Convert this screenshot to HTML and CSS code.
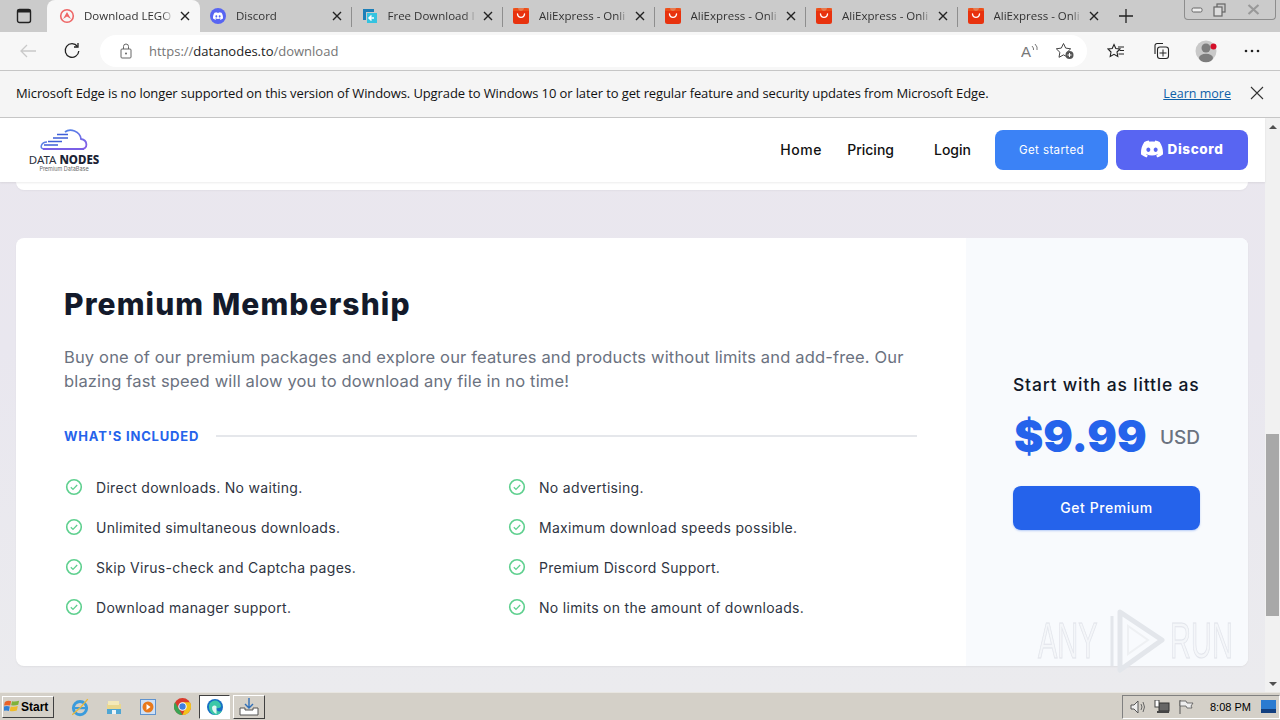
FILE: index.html
```html
<!DOCTYPE html>
<html lang="en">
<head>
<meta charset="utf-8">
<title>Download - Data Nodes</title>
<link rel="stylesheet" href="styles.css">
</head>
<body>
<svg class="defs" width="0" height="0" aria-hidden="true">
  <symbol id="ali" viewBox="0 0 16 16"><path d="M2.500 0H5c.3 4 5.700 4 6 0h2.500A2.500 2.500 0 0 1 16 2.500v11a2.500 2.500 0 0 1-2.500 2.500h-11A2.500 2.500 0 0 1 0 13.500v-11A2.500 2.500 0 0 1 2.500 0z" fill="#e8320e"/><path d="M0 0h16v3H0z" fill="#f05a1e" opacity=".7"/><path d="M4.500 6c.5 4.500 6.500 4.500 7 0" fill="none" stroke="#fff" stroke-width="1.400" stroke-linecap="round"/></symbol>
  <symbol id="x" viewBox="0 0 10 10"><path d="M1 1l8 8M9 1l-8 8" fill="none" stroke="#222" stroke-width="1.400"/></symbol>
  <symbol id="discord" viewBox="0 0 24 24"><path fill="currentColor" d="M20.317 4.3698a19.7913 19.7913 0 00-4.8851-1.5152.0741.0741 0 00-.0785.0371c-.211.3753-.4447.8648-.6083 1.2495-1.8447-.2762-3.68-.2762-5.4868 0-.1636-.3933-.4058-.8742-.6177-1.2495a.077.077 0 00-.0785-.037 19.7363 19.7363 0 00-4.8852 1.515.0699.0699 0 00-.0321.0277C.5334 9.0458-.319 13.5799.0992 18.0578a.0824.0824 0 00.0312.0561c2.0528 1.5076 4.0413 2.4228 5.9929 3.0294a.0777.0777 0 00.0842-.0276c.4616-.6304.8731-1.2952 1.226-1.9942a.076.076 0 00-.0416-.1057c-.6528-.2476-1.2743-.5495-1.8722-.8923a.077.077 0 01-.0076-.1277c.1258-.0943.2517-.1923.3718-.2914a.0743.0743 0 01.0776-.0105c3.9278 1.7933 8.18 1.7933 12.0614 0a.0739.0739 0 01.0785.0095c.1202.099.246.1981.3728.2924a.077.077 0 01-.0066.1276 12.2986 12.2986 0 01-1.873.8914.0766.0766 0 00-.0407.1067c.3604.698.7719 1.3628 1.225 1.9932a.076.076 0 00.0842.0286c1.961-.6067 3.9495-1.5219 6.0023-3.0294a.077.077 0 00.0313-.0552c.5004-5.177-.8382-9.6739-3.5485-13.6604a.061.061 0 00-.0312-.0286zM8.02 15.3312c-1.1825 0-2.1569-1.0857-2.1569-2.419 0-1.3332.9555-2.4189 2.157-2.4189 1.2108 0 2.1757 1.0952 2.1568 2.419 0 1.3332-.9555 2.4189-2.1569 2.4189zm7.9748 0c-1.1825 0-2.1569-1.0857-2.1569-2.419 0-1.3332.9554-2.4189 2.1569-2.4189 1.2108 0 2.1757 1.0952 2.1568 2.419 0 1.3332-.946 2.4189-2.1568 2.4189Z"/></symbol>
  <symbol id="check" viewBox="0 0 18 18"><circle cx="9" cy="9" r="7.300" fill="none" stroke="#5fd08f" stroke-width="1.600"/><path d="M5.800 9.200l2.200 2.200 4.200-4.400" fill="none" stroke="#5fd08f" stroke-width="1.300"/></symbol>
</svg>

<div class="tabbar">
  <div class="tabs-btn"><svg width="16" height="16" viewBox="0 0 16 16"><rect x="1.500" y="1.500" width="13" height="13" rx="2" fill="none" stroke="#222" stroke-width="1.400"/><rect x="1.500" y="1.500" width="13" height="3" fill="#222"/></svg></div>
  <div class="tab active">
    <svg class="fav" viewBox="0 0 16 16"><circle cx="8" cy="8" r="6.300" fill="none" stroke="#e66" stroke-width="1.600"/><path d="M4 11L8 4l4 7-4-2.500z" fill="#e66"/></svg>
    <span class="tab-title">Download LEGO</span><svg class="close"><use href="#x"/></svg>
  </div>
  <div class="tab">
    <svg class="fav" viewBox="0 0 16 16"><circle cx="8" cy="8" r="8" fill="#5865f2"/><svg x="3" y="3" width="10" height="10" color="#fff"><use href="#discord"/></svg></svg>
    <span class="tab-title">Discord</span><svg class="close"><use href="#x"/></svg>
  </div>
  <div class="tab sep">
    <svg class="fav" viewBox="0 0 16 16"><path d="M1 1h11v3H4v8H1z" fill="#1c7fb8"/><path d="M5 5h10v10H5z" fill="#35c3e0"/><path d="M7 10h5M9.500 7.500L7 10l2.500 2.500" fill="none" stroke="#fff" stroke-width="1.500"/></svg>
    <span class="tab-title">Free Download I</span><svg class="close"><use href="#x"/></svg>
  </div>
  <div class="tab sep"><svg class="fav"><use href="#ali"/></svg><span class="tab-title">AliExpress - Onli</span><svg class="close"><use href="#x"/></svg></div>
  <div class="tab sep"><svg class="fav"><use href="#ali"/></svg><span class="tab-title">AliExpress - Onli</span><svg class="close"><use href="#x"/></svg></div>
  <div class="tab sep"><svg class="fav"><use href="#ali"/></svg><span class="tab-title">AliExpress - Onli</span><svg class="close"><use href="#x"/></svg></div>
  <div class="tab sep"><svg class="fav"><use href="#ali"/></svg><span class="tab-title">AliExpress - Onli</span><svg class="close"><use href="#x"/></svg></div>
  <div class="new-tab"><svg width="16" height="16" viewBox="0 0 16 16"><path d="M8 1v14M1 8h14" stroke="#222" stroke-width="1.300"/></svg></div>
  <div class="winctl">
    <span class="wc"><svg width="12" height="8" viewBox="0 0 12 8"><rect x="1" y="2" width="10" height="4" rx="1.500" fill="#eee" stroke="#666"/></svg></span>
    <span class="wc"><svg width="13" height="14" viewBox="0 0 13 14"><rect x="4" y="1" width="8" height="8" fill="none" stroke="#666" stroke-width="1.200"/><rect x="1" y="4" width="8" height="9" fill="#ddd" stroke="#666" stroke-width="1.200"/></svg></span>
    <span class="wc wide"><svg width="13" height="11" viewBox="0 0 13 11"><path d="M1.500 1l10 9M11.500 1l-10 9" stroke="#999" stroke-width="2.200"/></svg></span>
  </div>
</div>

<div class="toolbar">
  <span class="tool-ico back"><svg width="18" height="16" viewBox="0 0 18 16"><path d="M17 8H2M8 2L2 8l6 6" fill="none" stroke="#c9c9c9" stroke-width="1.300"/></svg></span>
  <span class="tool-ico reload"><svg width="18" height="18" viewBox="0 0 18 18"><path d="M14.500 4.500A6.800 6.800 0 1 0 15.800 9" fill="none" stroke="#222" stroke-width="1.300"/><path d="M15 1v4h-4" fill="none" stroke="#222" stroke-width="1.300"/></svg></span>
  <div class="addr">
    <svg class="lock" width="12" height="16" viewBox="0 0 12 16"><rect x="1" y="6" width="10" height="9" rx="1" fill="none" stroke="#666"/><path d="M3.500 6V3.500a2.500 2.500 0 0 1 5 0V6" fill="none" stroke="#666"/><circle cx="6" cy="10.500" r="1" fill="#666"/></svg>
    <span class="url"><span class="dim">https://</span>datanodes.to<span class="dim">/download</span></span>
    <span class="addr-icons">
      <svg width="18" height="16" viewBox="0 0 18 16"><text class="aa" x="0" y="14">A</text><path d="M11 3q2 2 1.500 4M14 1q3 3 2 6" fill="none" stroke="#777"/></svg>
      <svg width="20" height="18" viewBox="0 0 20 18"><path d="M8.500 1.500l2.200 4.600 5 .7-3.600 3.500.9 5-4.500-2.400-4.500 2.400.9-5L1.300 6.800l5-.7z" fill="none" stroke="#444"/><circle cx="14.500" cy="13" r="4" fill="#555"/><path d="M12.500 13h4M14.500 11v4" stroke="#fff"/></svg>
    </span>
  </div>
  <div class="tool-right">
    <svg width="18" height="16" viewBox="0 0 18 16"><path d="M7 1.500l1.800 4 4.200.5-3 3 .8 4.500L7 11.300 3.200 13.500 4 9 1 6l4.200-.5z" fill="none" stroke="#222" stroke-width="1.100"/><path d="M11 4h6M12.500 7.500H17M11.500 11H17" stroke="#222"/></svg>
    <svg width="18" height="18" viewBox="0 0 18 18"><path d="M3 12V3.500A2 2 0 0 1 5 1.500h6" fill="none" stroke="#222" stroke-width="1.100"/><rect x="5.500" y="5" width="11" height="11.500" rx="2.500" fill="none" stroke="#222" stroke-width="1.100"/><path d="M11 7.500v7M7.500 11h7" stroke="#222"/></svg>
    <svg class="avatar" width="24" height="24" viewBox="0 0 24 24"><circle cx="11" cy="12" r="10.500" fill="#c9c9c9"/><circle cx="11" cy="9" r="4.500" fill="#7d7d7d"/><ellipse cx="11" cy="19" rx="7" ry="4.200" fill="#7d7d7d"/><circle cx="18.500" cy="7.500" r="3" fill="#d5102a"/></svg>
    <svg width="16" height="4" viewBox="0 0 16 4"><circle cx="2" cy="2" r="1.300" fill="#222"/><circle cx="8" cy="2" r="1.300" fill="#222"/><circle cx="14" cy="2" r="1.300" fill="#222"/></svg>
  </div>
</div>

<div class="infobar">
  <span class="info-text">Microsoft Edge is no longer supported on this version of Windows. Upgrade to Windows 10 or later to get regular feature and security updates from Microsoft Edge.</span>
  <a class="learn" href="#">Learn more</a>
  <svg class="info-x" width="14" height="14" viewBox="0 0 14 14"><path d="M1 1l12 12M13 1L1 13" stroke="#333" stroke-width="1.100"/></svg>
</div>

<div class="viewport">
  <main class="page">
    <header class="site-head">
      <div class="logo">
        <svg class="cloud" width="48" height="22" viewBox="0 0 48 22">
          <defs><linearGradient id="lg" x1="0" y1="0" x2="1" y2="1"><stop offset="0" stop-color="#3f8de8"/><stop offset="1" stop-color="#8a5be6"/></linearGradient></defs>
          <path d="M4 20h38c6 0 6-9-1-10C40 2 30-1 25 3" fill="none" stroke="url(#lg)" stroke-width="1.800"/>
          <path d="M4 20c-5 0-3-7 3-7" fill="none" stroke="#5b7fe6" stroke-width="1.500"/>
          <path d="M3 20h41" stroke="#7a5fe6" stroke-width="2"/>
          <path d="M4 16h14M8 12.500h14M13 9h15M17 5.500h11" stroke="#3f5fd8" stroke-width="1.400"/>
        </svg>
        <div class="logo-name">DATA <b>NODES</b></div>
        <div class="logo-sub">Premium DataBase</div>
      </div>
      <nav class="nav">
        <a class="nav-home">Home</a>
        <a class="nav-pricing">Pricing</a>
        <a class="nav-login">Login</a>
        <a class="btn-start">Get started</a>
        <a class="btn-discord"><svg width="22" height="22"><use href="#discord"/></svg><span>Discord</span></a>
      </nav>
    </header>
    <div class="prev-card"></div>
    <section class="card">
      <div class="card-main">
        <h1>Premium Membership</h1>
        <p class="lead">Buy one of our premium packages and explore our features and products without limits and add-free. Our blazing fast speed will alow you to download any file in no time!</p>
        <div class="incl"><h2>WHAT'S INCLUDED</h2><span class="rule"></span></div>
        <ul class="feats">
          <li><svg><use href="#check"/></svg>Direct downloads. No waiting.</li>
          <li><svg><use href="#check"/></svg>No advertising.</li>
          <li><svg><use href="#check"/></svg>Unlimited simultaneous downloads.</li>
          <li><svg><use href="#check"/></svg>Maximum download speeds possible.</li>
          <li><svg><use href="#check"/></svg>Skip Virus-check and Captcha pages.</li>
          <li><svg><use href="#check"/></svg>Premium Discord Support.</li>
          <li><svg><use href="#check"/></svg>Download manager support.</li>
          <li><svg><use href="#check"/></svg>No limits on the amount of downloads.</li>
        </ul>
      </div>
      <aside class="card-side">
        <div class="side-title">Start with as little as</div>
        <div class="price"><span class="amount">$9.99</span><span class="usd">USD</span></div>
        <a class="btn-premium">Get Premium</a>
      </aside>
    </section>
    <div class="watermark">
      <span class="wm-text">ANY</span>
      <svg class="wm-logo" width="58" height="66" viewBox="0 0 58 66"><path d="M4 8v50" fill="none" stroke="#e3e6eb" stroke-width="3"/><path d="M12 4l42 28-42 30z" fill="none" stroke="#e3e6eb" stroke-width="5" stroke-linejoin="round"/><path d="M20 18v28l20-14z" fill="none" stroke="#eef0f3" stroke-width="2"/></svg>
      <span class="wm-text">RUN</span>
    </div>
  </main>
  <div class="scrollbar">
    <span class="arrow up"></span>
    <span class="track"><span class="thumb"></span></span>
    <span class="arrow down"></span>
  </div>
</div>

<footer class="taskbar">
  <div class="start">
    <svg width="16" height="15" viewBox="0 0 18 16"><path d="M1 3q3-2 7-1L7 7Q4 6 0 7z" fill="#e8622a"/><path d="M9 2q3 1 8-.5L16 6q-4 1.500-8 .5z" fill="#7fb23a"/><path d="M0 8q3-1 6.500 0l-1 5Q3 12-1 13z" fill="#2f7fd6"/><path d="M7.500 8q4 1 8-.5l-1 5q-4 1.500-8 .5z" fill="#efbb2a"/></svg>
    <span>Start</span>
  </div>
  <div class="quick">
    <span class="qi"><svg width="20" height="20" viewBox="0 0 18 18"><circle cx="9" cy="10" r="6" fill="none" stroke="#3b9bdc" stroke-width="2.600"/><path d="M4 10h10" stroke="#3b9bdc" stroke-width="2"/><path d="M2 16Q10 10 16 2" fill="none" stroke="#e8b93a" stroke-width="1.200"/></svg></span>
    <span class="qi"><svg width="16" height="16" viewBox="0 0 16 16"><path d="M1 5h14v10H1z" fill="#e9d78e"/><path d="M2 2h11v4H2z" fill="#f4e9b8"/><path d="M1 10h14v5H1z" fill="#4fa6d4"/><path d="M6 11h4v4H6z" fill="#eef4f7"/></svg></span>
    <span class="qi"><svg width="16" height="16" viewBox="0 0 16 16"><rect x=".5" y=".5" width="15" height="15" fill="#cfe0f5" stroke="#5f93cf"/><circle cx="8" cy="8" r="5.500" fill="#e8791c"/><path d="M6.500 5l4 3-4 3z" fill="#fff"/></svg></span>
    <span class="qi"><svg width="17" height="17" viewBox="0 0 16 16"><circle cx="8" cy="8" r="8" fill="#d93a2c"/><path d="M8 16A8 8 0 0 1 1 4l4 7z" fill="#3aa354"/><path d="M8 16a8 8 0 0 0 7-12H8l3 5z" fill="#f3c21b"/><circle cx="8" cy="8" r="3.500" fill="#3f7fe0" stroke="#fff"/></svg></span>
    <span class="qi pressed"><svg width="18" height="18" viewBox="0 0 18 18"><circle cx="9" cy="9" r="8" fill="#1770c4"/><path d="M3 9a6 6 0 0 1 12-1c0 2-3 2.500-5 2 0 3 3 4 6 3a8 8 0 0 1-6 4C6 17 3 13 3 9z" fill="#3cc8a8"/><path d="M10.500 8.500A2.500 2.500 0 0 0 6 9.500c0 3 2 5.500 4.500 6.500" fill="#fff" opacity=".85"/></svg></span>
    <span class="qi raised"><svg width="20" height="18" viewBox="0 0 20 18"><path d="M10 0v10M6 6l4 4 4-4" fill="none" stroke="#2f6fb8" stroke-width="1.400"/><path d="M1 10h5v2h8v-2h5v7H1z" fill="#fff" stroke="#555"/></svg></span>
  </div>
  <div class="tray">
    <svg width="16" height="14" viewBox="0 0 16 14"><path d="M1 5h3l4-4v12L4 9H1z" fill="#eee" stroke="#555"/><path d="M11 4q2 3 0 6M13 2q3 5 0 10" fill="none" stroke="#666"/></svg>
    <svg width="16" height="14" viewBox="0 0 16 14"><rect x="5" y="3" width="10" height="8" fill="#666" stroke="#333"/><rect x="1" y="0" width="4" height="7" fill="#fff" stroke="#444"/><path d="M3 12h12" stroke="#444" stroke-width="2"/></svg>
    <svg width="16" height="14" viewBox="0 0 16 14"><path d="M2 0v14" stroke="#555"/><path d="M2 1h6l1 2h6l-2 3 1 2H9L8 6H2z" fill="#eee" stroke="#555" stroke-width=".8"/></svg>
    <span class="clock">8:08 PM</span>
    <svg class="desk" width="15" height="13" viewBox="0 0 15 13"><rect width="15" height="13" fill="#2a7bd1"/><rect y="9" width="15" height="4" fill="#123f7f"/></svg>
  </div>
</footer>
</body>
</html>
```
FILE: styles.css
```css
* { box-sizing: border-box; }
html, body { margin: 0; height: 720px; overflow: hidden; }
body { display: flex; flex-direction: column; font-family: "Open Sans", "Noto Sans", sans-serif; color: #111; background: #fff; }
.defs { position: absolute; }
a { text-decoration: none; }

.tabbar { height: 32px; background: #cbcbcb; display: flex; align-items: flex-end; flex: none; }
.tabs-btn { width: 47px; height: 32px; display: flex; align-items: center; justify-content: center; }
.tab { width: 151.500px; height: 32px; display: flex; align-items: center; padding: 0 10px 1px; position: relative; font-size: 11.500px; color: #333; }
.tab.active { width: 153px; background: #f7f7f7; border-radius: 8px 8px 0 0; padding-left: 12px; }
.tab.active .fav { margin-right: 9px; }
.tab.sep::before { content: ""; position: absolute; left: -1px; top: 7px; height: 20px; width: 1px; background: #8e8e8e; }
.fav { width: 16px; height: 16px; flex: none; margin-right: 10px; }
.tab-title { flex: 1; min-width: 0; white-space: nowrap; mask-image: linear-gradient(to right, #000 88%, transparent 102%); -webkit-mask-image: linear-gradient(to right, #000 88%, transparent 102%); }
.close { width: 10px; height: 10px; flex: none; margin-left: 8px; }
.new-tab { width: 34px; height: 32px; display: flex; align-items: center; justify-content: center; }
.winctl { margin-left: auto; margin-right: 4px; align-self: flex-start; width: 92px; height: 20px; border: 1px solid #8d8d8d; border-top: 0; border-radius: 0 0 4px 4px; display: flex; align-items: center; }
.wc { width: 23px; display: flex; justify-content: center; }
.wc.wide { flex: 1; }

.toolbar { height: 39px; flex: none; background: #f7f7f7; border-bottom: 1px solid #c6c6c6; display: flex; align-items: center; padding-bottom: 1px; }
.tool-ico { display: flex; justify-content: center; align-items: center; flex: none; }
.back { width: 56px; }
.reload { width: 32px; margin-right: 12px; }
.addr { width: 987px; height: 32px; background: #fff; border-radius: 16px; display: flex; align-items: center; padding-left: 20px; font-size: 13px; flex: none; }
.lock { margin-right: 17px; }
.url { color: #222; font-size: 13px; }
.dim { color: #757575; }
.addr-icons { margin-left: auto; margin-right: 12px; display: flex; align-items: center; gap: 16px; }
.aa { font-size: 15px; fill: #777; font-family: "Liberation Sans", sans-serif; }
.tool-right { flex: 1; display: flex; align-items: center; padding-left: 20px; gap: 27px; }
.avatar { margin: 0 -2px; }

.infobar { height: 47px; flex: none; background: #f5f5f5; border-bottom: 1px solid #c6c6c6; display: flex; align-items: center; padding: 0 17px 2px 16px; font-size: 13px; color: #111; }
.info-text { flex: 1; white-space: nowrap; letter-spacing: -.105px; }
.learn { color: #0f5fa8; text-decoration: underline; font-size: 12.500px; margin-right: 18px; }
.info-x { margin-left: 1px; margin-right: -1px; }

.viewport { height: 574px; flex: none; display: flex; overflow: hidden; }
.page { flex: 1; min-width: 0; position: relative; background: linear-gradient(180deg, #eae7ee, #e9e7ef 40%, #ebebee); font-family: Inter, "Open Sans", sans-serif; }
.site-head { height: 64px; background: #fff; box-shadow: 0 1px 2px rgba(0,0,0,.08); display: flex; align-items: center; justify-content: space-between; padding: 0 17px 0 28px; position: relative; }
.logo { display: flex; flex-direction: column; align-items: center; width: 72px; padding-top: 2px; }
.cloud { margin-bottom: 2px; }
.logo-name { font-family: "Noto Sans", sans-serif; font-size: 11.500px; line-height: 13px; color: #2a2f3c; white-space: nowrap; }
.logo-name b { font-weight: 800; color: #1a2234; }
.logo-sub { font-size: 5.500px; line-height: 7px; color: #666; white-space: nowrap; }
.nav { display: flex; align-items: center; font-size: 14px; font-weight: 500; color: #111; padding-bottom: 1px; }
.nav a { display: block; }
.nav-home { letter-spacing: .6px; }
.nav-pricing { margin-left: 25px; }
.nav-login { margin-left: 40px; }
.btn-start { margin-left: 24px; width: 113px; height: 40px; border-radius: 8px; background: #3b82f6; color: #fff; font-size: 11.500px; font-weight: 400; letter-spacing: .4px; line-height: 40px; text-align: center; margin-top: 1px; }
.btn-discord { margin-left: 8px; width: 132px; height: 40px; border-radius: 8px; background: #5865f2; color: #fff; display: flex !important; align-items: center; justify-content: center; gap: 5px; font-size: 13.500px; font-weight: 800; letter-spacing: .6px; margin-top: 1px; padding-bottom: 2px; }
.prev-card { height: 8px; margin: 0 17px 0 16px; background: #fff; border-radius: 0 0 10px 10px; box-shadow: 0 1px 2px rgba(0,0,0,.04); }

.card { margin: 48px 17px 0 16px; height: 428px; background: #fff; border-radius: 8px; overflow: hidden; display: flex; box-shadow: 0 1px 2px rgba(0,0,0,.05); }
.card-main { width: 950px; padding: 49px 49px 0 48px; }
h1 { margin: 0; font-size: 30px; line-height: 34px; font-weight: 800; color: #131a2b; letter-spacing: 1.100px; }
.lead { margin: 24px 0 0; font-size: 16.500px; line-height: 24px; color: #6b7280; letter-spacing: .16px; }
.incl { margin-top: 33px; display: flex; align-items: center; gap: 17px; }
h2 { margin: 0; font-size: 13px; line-height: 20px; font-weight: 700; color: #2563eb; letter-spacing: .8px; }
.rule { flex: 1; height: 2px; background: #e5e7eb; }
.feats { list-style: none; margin: 21px 0 0; padding: 0; display: grid; grid-template-columns: 443px 1fr; grid-auto-rows: 40px; font-size: 14px; color: #2f3542; letter-spacing: .3px; }
.feats li { display: flex; align-items: center; gap: 14px; }
.feats svg { width: 18px; height: 18px; flex: none; margin-left: 1px; margin-right: -1px; }
.card-side { flex: 1; background: #f8fafd; padding: 136px 48px 0 47px; }
.side-title { font-size: 17.500px; line-height: 22px; font-weight: 500; color: #111827; white-space: nowrap; letter-spacing: .8px; }
.price { display: flex; align-items: center; margin-top: 14px; justify-content: space-between; }
.amount { font-size: 44px; line-height: 52px; font-weight: 900; color: #2563eb; margin-left: 1px; }
.usd { font-size: 19px; font-weight: 500; color: #6b7280; padding-top: 2px; }
.btn-premium { display: block; margin-top: 24px; height: 44px; border-radius: 8px; background: #2563eb; color: #fff; font-size: 14px; font-weight: 500; letter-spacing: .55px; line-height: 44px; text-align: center; box-shadow: 0 1px 2px rgba(37,99,235,.3); }

.watermark { position: absolute; left: 1038px; top: 488px; display: flex; align-items: center; gap: 8px; font-family: "Liberation Sans", sans-serif; font-size: 50px; line-height: 70px; color: rgba(240,242,246,.5); -webkit-text-stroke: 1px rgba(222,225,231,.85); }
.wm-text { display: block; width: 62px; transform: scaleX(.58); transform-origin: left center; white-space: nowrap; }
.wm-logo { margin-right: -4px; }

.scrollbar { width: 15px; flex: none; background: #f1f1f1; display: flex; flex-direction: column; }
.arrow { height: 17px; flex: none; display: flex; align-items: center; justify-content: center; }
.arrow::after { content: ""; border-left: 4px solid transparent; border-right: 4px solid transparent; }
.arrow.up::after { border-bottom: 4px solid #505050; }
.arrow.down::after { border-top: 4px solid #505050; }
.track { flex: 1; padding-top: 299px; display: block; }
.thumb { display: block; height: 182px; margin: 0 1px; background: #a8a8a8; }

.taskbar { height: 28px; flex: none; background: #d4d0c8; border-top: 1px solid #e8e6e1; display: flex; align-items: center; padding-left: 2px; position: relative; }
.start { width: 52px; height: 22px; display: flex; align-items: center; gap: 1px; padding-left: 1px; background: #d4d0c8; border: 1px solid; border-color: #fff #404040 #404040 #fff; font-family: "Liberation Sans", sans-serif; font-size: 12px; font-weight: 700; color: #000; }
.quick { display: flex; align-items: center; margin-left: 9px; }
.qi { width: 34px; height: 24px; display: flex; align-items: center; justify-content: center; }
.pressed { width: 31px; background: #fff; border: 1px solid; border-color: #404040 #fff #fff #404040; }
.raised { width: 32px; margin-left: 3px; border: 1px solid; border-color: #fff #404040 #404040 #fff; }
.tray { margin-left: auto; width: 158px; height: 24px; border: 1px solid; border-color: #808080 #fff #fff #808080; display: flex; align-items: center; padding-left: 7px; gap: 8px; }
.clock { margin-left: 8px; font-family: "Liberation Sans", sans-serif; font-size: 11px; color: #000; white-space: nowrap; }
.desk { margin-left: 2px; }
```
